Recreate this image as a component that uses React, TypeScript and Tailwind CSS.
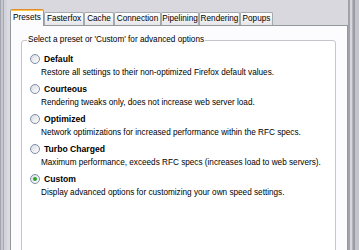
import React from "react";

const tabs = [
  { label: "Presets", cls: "w-[34px]" },
  { label: "Fasterfox", cls: "w-[40px]" },
  { label: "Cache", cls: "w-[30px]" },
  { label: "Connection", cls: "w-[47px]" },
  { label: "Pipelining", cls: "w-[38px]" },
  { label: "Rendering", cls: "w-[41px]" },
  { label: "Popups", cls: "w-[33px]" },
];

const presets = [
  { name: "Default", desc: "Restore all settings to their non-optimized Firefox default values." },
  { name: "Courteous", desc: "Rendering tweaks only, does not increase web server load." },
  { name: "Optimized", desc: "Network optimizations for increased performance within the RFC specs." },
  { name: "Turbo Charged", desc: "Maximum performance, exceeds RFC specs (increases load to web servers)." },
  { name: "Custom", desc: "Display advanced options for customizing your own speed settings." },
];

function Radio({ checked }: { checked: boolean }) {
  return (
    <span className="flex h-[10px] w-[10px] shrink-0 items-center justify-center rounded-full border border-[#7d8ea6] bg-gradient-to-br from-[#d9dbe2] to-[#ffffff]">
      {checked && <span className="h-[4px] w-[4px] rounded-full bg-[#2aa52a]" />}
    </span>
  );
}

export default function App() {
  return (
    <div className="flex h-[250px] w-[359px] overflow-hidden bg-[#d8d8de] font-['Liberation_Sans',Arial,sans-serif] text-[8.2px] text-black">
      {/* left window edge */}
      <div className="flex h-full w-[10px] shrink-0">
        <div className="w-[1px] bg-[#a4a4ae]" />
        <div className="w-[2px] bg-[#c6c6ce]" />
        <div className="w-[1px] bg-[#a8a8b2]" />
        <div className="w-[3px] bg-[#d2d2da]" />
        <div className="w-[3px] bg-[#dadae0]" />
      </div>

      <div className="flex w-[338px] shrink-0 flex-col pt-[9px]">
        {/* tab strip */}
        <div className="relative z-10 flex h-[16px] items-end">
          {tabs.map((t, i) =>
            i === 0 ? (
              <div
                key={t.label}
                className={`${t.cls} mb-[-1px] flex h-[17px] flex-col rounded-t-[2px] border-x border-[#919b9c] bg-[#fcfcfe]`}
              >
                <div className="h-[1px] rounded-t-[2px] bg-[#e68b2c]" />
                <div className="h-[1px] bg-[#ffc73c]" />
                <div className="flex flex-1 items-center justify-center pb-[1px] leading-none">{t.label}</div>
              </div>
            ) : (
              <div
                key={t.label}
                className={`${t.cls} flex h-[13px] items-center justify-center rounded-t-[2px] border-x border-t border-[#a3aab0] bg-gradient-to-b from-[#ffffff] to-[#e6e6ea] leading-none`}
              >
                {t.label}
              </div>
            )
          )}
        </div>

        {/* panel */}
        <div className="flex-1 border border-[#919b9c] bg-[#fcfcfe] pl-[10px] pr-[11px] pt-[14px]">
          <div className="relative h-[240px] rounded-[3px] border border-[#c4c6cc] bg-[#ffffff] pl-[8px] pt-[11px]">
            <span className="absolute left-[5px] top-[-7px] bg-[#fcfcfe] px-[1px] leading-[12px]">
              Select a preset or 'Custom' for advanced options
            </span>
            <div className="flex flex-col gap-[2px]">
              {presets.map((p) => (
                <div key={p.name} className="flex flex-col">
                  <div className="flex h-[14px] items-center gap-[4px]">
                    <Radio checked={p.name === "Custom"} />
                    <span className="text-[8.6px] font-bold">{p.name}</span>
                  </div>
                  <div className="h-[14px] pl-[11px] leading-[14px]">{p.desc}</div>
                </div>
              ))}
            </div>
          </div>
        </div>
      </div>

      {/* right window edge */}
      <div className="flex h-full w-[11px] shrink-0">
        <div className="w-[2px] bg-[#a2a2ac]" />
        <div className="w-[2px] bg-[#d6d6dc]" />
        <div className="w-[1px] bg-[#b4b4bc]" />
        <div className="w-[2px] bg-[#9c9ca8]" />
        <div className="w-[4px] bg-[#c4c4cc]" />
      </div>
    </div>
  );
}
